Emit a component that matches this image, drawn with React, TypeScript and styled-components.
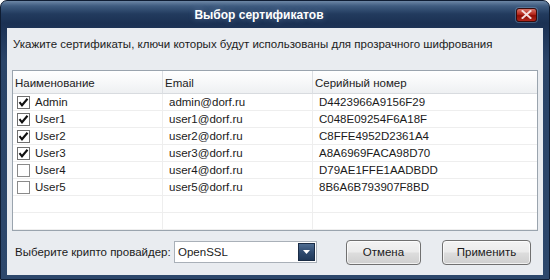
import React, { useState } from "react";
import styled, { createGlobalStyle } from "styled-components";

const GlobalStyle = createGlobalStyle`
    html, body {
        margin: 0;
        padding: 0;
        background: #ffffff;
    }
    body {
        font-family: "Liberation Sans", Arial, sans-serif;
        font-size: 11.5px;
        color: #1b1b1b;
    }
`

type Cert = { name: string; email: string; serial: string; checked: boolean };

const initialCerts: Cert[] = [
    { name: "Admin", email: "admin@dorf.ru", serial: "D4423966A9156F29", checked: true },
    { name: "User1", email: "user1@dorf.ru", serial: "C048E09254F6A18F", checked: true },
    { name: "User2", email: "user2@dorf.ru", serial: "C8FFE4952D2361A4", checked: true },
    { name: "User3", email: "user3@dorf.ru", serial: "A8A6969FACA98D70", checked: true },
    { name: "User4", email: "user4@dorf.ru", serial: "D79AE1FFE1AADBDD", checked: false },
    { name: "User5", email: "user5@dorf.ru", serial: "8B6A6B793907F8BD", checked: false },
];

export default function App() {
    const [certs, setCerts] = useState(initialCerts);

    const toggle = (index: number) => {
        setCerts(certs.map((c, i) => (i === index ? { ...c, checked: !c.checked } : c)));
    }

    return (
        <>
            <GlobalStyle />
            <Window>
                <TitleBar>
                    <Title>Выбор сертификатов</Title>
                    <CloseButton aria-label="Закрыть">
                        <svg width="11" height="9" viewBox="0 0 11 9">
                            <path d="M1.5 1 L9.5 8 M9.5 1 L1.5 8" stroke="#f4dcdc" strokeWidth="2" strokeLinecap="square" />
                        </svg>
                    </CloseButton>
                </TitleBar>

                <Client>
                    <Prompt>Укажите сертификаты, ключи которых будут использованы для прозрачного шифрования</Prompt>

                    <Grid>
                        <HeaderCell>Наименование</HeaderCell>
                        <HeaderCell>Email</HeaderCell>
                        <HeaderCell last>Серийный номер</HeaderCell>

                        {certs.map((c, i) => (
                            <React.Fragment key={c.name}>
                                <NameCell onClick={() => toggle(i)}>
                                    <Check checked={c.checked}>
                                        {c.checked && (
                                            <svg width="11" height="11" viewBox="0 0 11 11">
                                                <path d="M1.5 5.2 L4 8.3 L9.5 1.8" fill="none" stroke="#111" strokeWidth="2.1" />
                                            </svg>
                                        )}
                                    </Check>
                                    {c.name}
                                </NameCell>
                                <Cell>{c.email}</Cell>
                                <Cell last>{c.serial}</Cell>
                            </React.Fragment>
                        ))}

                        {[0, 1].map((n) => (
                            <React.Fragment key={"empty" + n}>
                                <Cell />
                                <Cell />
                                <Cell last />
                            </React.Fragment>
                        ))}
                    </Grid>

                    <Footer>
                        <Label>Выберите крипто провайдер:</Label>
                        <Combo>
                            <ComboText>OpenSSL</ComboText>
                            <ComboArrow>
                                <svg width="7" height="4" viewBox="0 0 7 4">
                                    <path d="M0 0 L7 0 L3.5 4 Z" fill="#ffffff" />
                                </svg>
                            </ComboArrow>
                        </Combo>
                        <Spacer />
                        <Button width={75}>Отмена</Button>
                        <Button width={89}>Применить</Button>
                    </Footer>
                </Client>
            </Window>
        </>
    )
}

const Window = styled.div`
    width: 550px;
    height: 280px;
    box-sizing: border-box;
    display: flex;
    flex-direction: column;
    border-radius: 7px 7px 0 0;
    border: 1px solid #0f1d33;
    background: linear-gradient(180deg, #6d87a6 0px, #3f5c80 5px, #223b5e 13px, #1b3153 22px, #2a4468 60px, #2d486c 100%);
    overflow: hidden;
`

const TitleBar = styled.div`
    height: 27px;
    flex: 0 0 27px;
    display: flex;
    align-items: center;
    padding-left: 6px;
`

const Title = styled.div`
    flex: 1;
    text-align: center;
    color: #ffffff;
    font-weight: bold;
    font-size: 12px;
    text-shadow: 0 0 6px rgba(180, 210, 255, 0.35);
    padding-top: 1px;
`

const CloseButton = styled.button`
    width: 21px;
    height: 14px;
    margin: 0 12px 0 5px;
    padding: 0;
    display: flex;
    align-items: center;
    justify-content: center;
    border: 1px solid #3a0b0b;
    border-radius: 3px;
    background: linear-gradient(180deg, #d8756a 0%, #b5261a 45%, #8e0d05 55%, #b0261a 100%);
    box-shadow: 0 0 0 1px rgba(150, 180, 210, 0.35);
`

const Client = styled.div`
    flex: 1;
    margin: 0 6px 4px 6px;
    background: #e9ecf0;
    display: flex;
    flex-direction: column;
    padding: 0 5px;
`

const Prompt = styled.div`
    height: 42px;
    display: flex;
    align-items: center;
    padding-left: 1px;
    padding-bottom: 10px;
    box-sizing: border-box;
    white-space: nowrap;
`

const Grid = styled.div`
    display: grid;
    grid-template-columns: 150px 150px 1fr;
    grid-template-rows: 23px;
    grid-auto-rows: 17px;
    background: #ffffff;
    border: 1px solid #9aa4ae;
`

const HeaderCell = styled.div<{ last?: boolean }>`
    display: flex;
    align-items: center;
    padding-left: 2px;
    padding-top: 1px;
    background: linear-gradient(180deg, #ffffff 0%, #f7f8f9 50%, #eef0f2 100%);
    border-bottom: 1px solid #d8dbdf;
    border-right: ${(p) => (p.last ? "none" : "1px solid #dcdfe3")};
    box-sizing: border-box;
    color: #222;
`

const Cell = styled.div<{ last?: boolean }>`
    display: flex;
    align-items: center;
    padding-left: 6px;
    border-bottom: 1px solid #eeeeee;
    border-right: ${(p) => (p.last ? "none" : "1px solid #eeeeee")};
    box-sizing: border-box;
    white-space: nowrap;
`

const NameCell = styled(Cell)`
    padding-left: 4px;
    gap: 5px;
    cursor: default;
`

const Check = styled.span<{ checked: boolean }>`
    width: 13px;
    height: 13px;
    flex: 0 0 13px;
    box-sizing: border-box;
    border: 1px solid ${(p) => (p.checked ? "#6f6f6f" : "#8a8a8a")};
    background: #ffffff;
    display: flex;
    align-items: center;
    justify-content: center;
`

const Footer = styled.div`
    flex: 1;
    display: flex;
    align-items: center;
    padding: 0 7px 2px 3px;
`

const Label = styled.span`
    width: 159px;
    flex: 0 0 159px;
    white-space: nowrap;
`

const Combo = styled.div`
    width: 143px;
    height: 22px;
    flex: 0 0 143px;
    box-sizing: border-box;
    display: flex;
    align-items: stretch;
    background: #ffffff;
    border: 1px solid #a9b0b8;
`

const ComboText = styled.span`
    flex: 1;
    display: flex;
    align-items: center;
    padding-left: 3px;
`

const ComboArrow = styled.span`
    width: 15px;
    display: flex;
    align-items: center;
    justify-content: center;
    margin: 1px;
    background: linear-gradient(180deg, #4f6d92 0%, #2f4b70 50%, #1f3859 100%);
    border: 1px solid #1a2c45;
`

const Spacer = styled.div`
    flex: 1;
`

const Button = styled.button<{ width: number }>`
    width: ${(p) => p.width}px;
    height: 25px;
    margin-left: 21px;
    border: 1px solid #707070;
    border-radius: 4px;
    background: linear-gradient(180deg, #f3f3f3 0%, #ebebeb 48%, #dddddd 52%, #cfcfcf 100%);
    box-shadow: inset 0 0 0 1px rgba(255, 255, 255, 0.7);
    font-family: "Liberation Sans", Arial, sans-serif;
    font-size: 11.5px;
    color: #1b1b1b;
    padding: 0;
`
